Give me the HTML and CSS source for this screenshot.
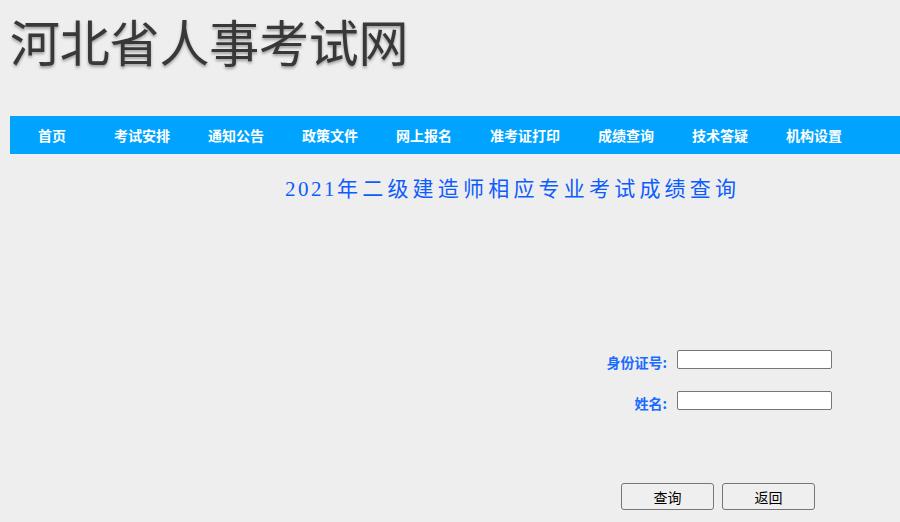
FILE: index.html
```html
<!DOCTYPE html>
<html lang="zh-CN">
<head>
<meta charset="utf-8">
<title>河北省人事考试网</title>
<link rel="stylesheet" href="styles.css">
</head>
<body>
<div class="page">
  <header class="header">
    <h1 class="logo">河北省人事考试网</h1>
  </header>
  <nav class="nav">
    <a class="nav-item first" href="#">首页</a>
    <a class="nav-item" href="#">考试安排</a>
    <a class="nav-item" href="#">通知公告</a>
    <a class="nav-item" href="#">政策文件</a>
    <a class="nav-item" href="#">网上报名</a>
    <a class="nav-item" href="#">准考证打印</a>
    <a class="nav-item" href="#">成绩查询</a>
    <a class="nav-item" href="#">技术答疑</a>
    <a class="nav-item" href="#">机构设置</a>
  </nav>
  <main class="main">
    <h2 class="title"><span class="year">2021</span>年二级建造师相应专业考试成绩查询</h2>
    <form class="form">
      <div class="row">
        <label class="label">身份证号:</label>
        <input class="input" type="text">
      </div>
      <div class="row">
        <label class="label">姓名:</label>
        <input class="input" type="text">
      </div>
      <div class="buttons">
        <button class="btn" type="button">查询</button>
        <button class="btn" type="button">返回</button>
      </div>
    </form>
  </main>
</div>
</body>
</html>
```
FILE: styles.css
```css
html, body {
  margin: 0;
  padding: 0;
  background: #eeeeee;
  font-family: "Noto Sans CJK SC", "Liberation Sans", sans-serif;
  overflow: hidden;
}
.page {
  width: 900px;
  height: 522px;
  padding-left: 10px;
  box-sizing: border-box;
}
.header {
  height: 116px;
  padding-top: 10px;
  box-sizing: border-box;
}
.logo {
  margin: 0;
  font-size: 50px;
  font-weight: normal;
  line-height: 60px;
  color: #383838;
  letter-spacing: -0.2px;
  text-shadow: 0 2px 3px rgba(0, 0, 0, 0.35);
}
.nav {
  display: flex;
  height: 38px;
  align-items: center;
  background: #00a4ff;
}
.nav-item {
  padding: 0 19px;
  font-size: 14px;
  font-weight: bold;
  color: #ffffff;
  text-decoration: none;
  line-height: 20px;
}
.nav-item.first {
  padding: 0 29px 0 28px;
}
.main {
  padding-top: 20px;
}
.title {
  margin: 0 0 0 275px;
  font-family: "Liberation Serif", "Noto Sans CJK SC", serif;
  font-size: 21px;
  font-weight: normal;
  line-height: 30px;
  letter-spacing: 4.2px;
  color: #0d5cff;
}
.year {
  letter-spacing: 2.5px;
}
.form {
  margin: 146px 0 0 0;
}
.row {
  display: flex;
  align-items: center;
  height: 19px;
  margin-bottom: 22px;
}
.label {
  width: 667px;
  padding-right: 10px;
  box-sizing: border-box;
  text-align: right;
  font-size: 14px;
  font-weight: bold;
  color: #1a6cff;
  position: relative;
  top: 2px;
}
.input {
  width: 155px;
  height: 19px;
  box-sizing: border-box;
  margin: 0;
  padding: 1px 2px;
  border: 1px solid #767676;
  border-radius: 2px;
  background: #ffffff;
}
.buttons {
  display: flex;
  gap: 8px;
  margin: 73px 0 0 611px;
}
.btn {
  width: 93px;
  height: 27px;
  margin: 0;
  padding: 0;
  border: 1px solid #767676;
  border-radius: 3px;
  background: #efefef;
  font-family: "Noto Sans CJK SC", sans-serif;
  font-size: 14px;
  color: #000000;
}
```
